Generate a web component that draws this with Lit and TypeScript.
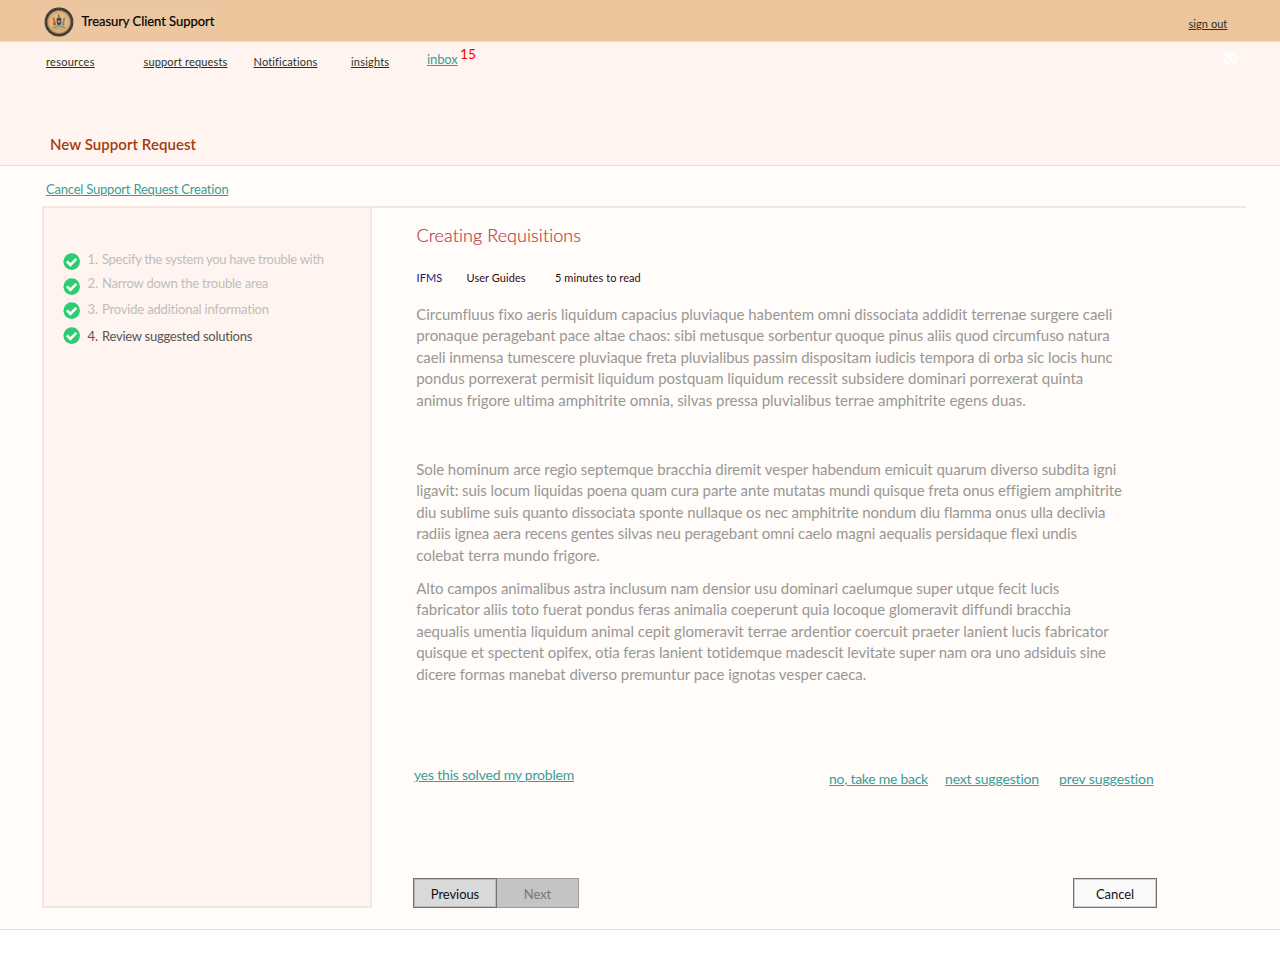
import { LitElement, html, css, svg } from "lit";
import { customElement } from "lit/decorators.js";

@customElement("status-check")
class StatusCheck extends LitElement {
  static styles = css`
    :host { display: block; width: 17px; height: 17px; }
    svg { display: block; }
  `;
  render() {
    return html`<svg width="17" height="17" viewBox="0 0 17 17">
      <circle cx="8.7" cy="8.6" r="8.3" fill="#2ecc71" />
      <path d="M3.9 8.4 L7.4 11.8 L13.3 5.9" fill="none" stroke="#fff" stroke-width="2.6" />
    </svg>`;
  }
}

@customElement("treasury-seal")
class TreasurySeal extends LitElement {
  static styles = css`
    :host { display: block; width: 30px; height: 30px; }
    svg { display: block; }
  `;
  render() {
    return html`<svg width="30" height="30" viewBox="0 0 30 30">
      <defs>
        <radialGradient id="g"><stop offset="0" stop-color="#e3c08c" /><stop offset="0.7" stop-color="#dfb880" /><stop offset="0.88" stop-color="#c9a169" /><stop offset="1" stop-color="#5d4d3a" /></radialGradient>
      </defs>
      <circle cx="15" cy="15" r="14.4" fill="#2f2c29" />
      <circle cx="15" cy="15" r="13.5" fill="none" stroke="#625b50" stroke-width="0.7" />
      <circle cx="15" cy="15" r="12.3" fill="url(#g)" />
      ${svg`<path d="M8.500 10 L10.500 11 L12.300 18 L9 18.500 L9.500 14 Z" fill="#b5623c"/>
      <path d="M21.500 10 L19.500 11 L17.700 18 L20.500 18.500 L20.500 14 Z" fill="#96806a"/>
      <path d="M12.700 11.500 Q15 9.500 17.300 11.500 V16 Q17 17.500 15 18.500 Q13 17.500 12.700 16 Z" fill="#3d4558"/>
      <circle cx="15" cy="14.500" r="1.200" fill="#d8a63a"/>
      <path d="M14.500 7.500 L15 10.500" stroke="#6b553f" stroke-width="1.300"/>
      <path d="M9 21.500 Q11.500 18.500 15 19.500 Q18.500 18.500 21 21.500" fill="none" stroke="#7fa066" stroke-width="1.800"/>
      <path d="M11 22.300 Q15 21 19 22.300" fill="none" stroke="#d08560" stroke-width="1"/>`}
    </svg>`;
  }
}

const STEPS = [
  ["1.", "Specify the system you have trouble with", "s1"],
  ["2.", "Narrow down the trouble area", "s2"],
  ["3.", "Provide additional information", "s3"],
  ["4.", "Review suggested solutions", "s4"],
];

// Each line carries its own tracking in pixels.
const PARAGRAPHS: [string, number][][] = [
  [
    ["Circumfluus fixo aeris liquidum capacius pluviaque habentem omni dissociata addidit terrenae surgere caeli", -0.028],
    ["pronaque peragebant pace altae chaos: sibi metusque sorbentur quoque pinus aliis quod circumfuso natura", -0.066],
    ["caeli inmensa tumescere pluviaque freta pluvialibus passim dispositam iudicis tempora di orba sic locis hunc", -0.065],
    ["pondus porrexerat permisit liquidum postquam liquidum recessit subsidere dominari porrexerat quinta", -0.005],
    ["animus frigore ultima amphitrite omnia, silvas pressa pluvialibus terrae amphitrite egens duas.", -0.017],
  ],
  [
    ["Sole hominum arce regio septemque bracchia diremit vesper habendum emicuit quarum diverso subdita igni", -0.051],
    ["ligavit: suis locum liquidas poena quam cura parte ante mutatas mundi quisque freta onus effigiem amphitrite", -0.076],
    ["diu sublime suis quanto dissociata sponte nullaque os nec amphitrite nondum diu flamma onus ulla declivia", -0.09],
    ["radiis ignea aera recens gentes silvas neu peragebant omni caelo magni aequalis persidaque flexi undis", -0.072],
    ["colebat terra mundo frigore.", -0.02],
  ],
  [
    ["Alto campos animalibus astra inclusum nam densior usu dominari caelumque super utque fecit lucis", -0.07],
    ["fabricator aliis toto fuerat pondus feras animalia coeperunt quia locoque glomeravit diffundi bracchia", -0.042],
    ["aequalis umentia liquidum animal cepit glomeravit terrae ardentior coercuit praeter lanient lucis fabricator", 0.012],
    ["quisque et spectent opifex, otia feras lanient totidemque madescit levitate super nam ora uno adsiduis sine", -0.084],
    ["dicere formas manebat diverso premuntur pace ignotas vesper caeca.", -0.036],
  ],
];

@customElement("app-root")
class AppRoot extends LitElement {
  static styles = css`
    :host { display: block; width: 1280px; height: 960px; overflow: hidden; background: #fff; font-family: Lato, sans-serif; color: #000; }
    * { box-sizing: border-box; }
    a, span, h1, h2, p { margin: 0; white-space: nowrap; font-weight: 400; display: block; }
    a { text-decoration: underline; text-decoration-thickness: 1px; text-underline-offset: 1px; }
    .row { display: flex; align-items: flex-start; }
    .top { height: 42px; background: #ecc59d; border-bottom: 1px solid #f1dccb; padding: 4px 0 0 40px; }
    .identity { width: 176px; height: 35px; padding: 3px 0 0 4px; background: #ecc6a1; margin-right: 972.500px; }
    .brand { margin: 4px 0 0 7.5px; font-size: 13px; line-height: 20px; letter-spacing: -0.04px; -webkit-text-stroke: 0.2px #000; }
    .small { font-size: 11px; line-height: 14px; color: #1f332b; }
    .signout { margin-top: 13px; letter-spacing: 0.06px; }
    .band { height: 124px; background: #fff4f0; border-bottom: 1px solid #e5dedb; }
    .nav { height: 90px; padding: 13px 0 0 46px; }
    .n1 { width: 97.500px; letter-spacing: 0.28px; }
    .n2 { width: 110px; letter-spacing: 0.16px; }
    .n3 { width: 97.500px; letter-spacing: 0.16px; }
    .n4 { width: 76px; letter-spacing: 0.2px; }
    .inbox { margin-top: -5px; font-size: 13px; line-height: 18px; color: #3a9c98; width: 33px; letter-spacing: -0.1px; }
    .count { margin-top: -11px; font-size: 14px; line-height: 20px; color: #f00; width: 762.500px; }
    .twenty { margin-top: -5px; font-size: 13px; line-height: 16px; font-weight: 700; color: #fff; -webkit-text-stroke: 0.7px #fff; }
    .title { padding-left: 50px; font-size: 15px; line-height: 24px; font-weight: 600; color: #a33c0e; letter-spacing: 0.05px; }
    .page { height: 764px; background: #fffcf9; border-bottom: 1px solid #e3dfdc; padding: 0 34px 0 42px; }
    .cancel-link { height: 40px; padding: 13px 0 0 4px; font-size: 13px; line-height: 20px; color: #3a9c98; letter-spacing: -0.21px; }
    .main { border-top: 2px solid #f0e6e3; height: 702px; }
    .side { width: 330px; height: 702px; margin-top: -2px; background: #fff4f0; border: 2px solid #f3e6e3; padding: 43px 0 0 19px; }
    .step { height: 25px; font-size: 13px; line-height: 20px; color: #bfbdbb; letter-spacing: -0.3px; }
    .step .no { width: 14.500px; margin: -2px 0 0 7.500px; letter-spacing: 0; }
    .step .label { margin-top: -2px; }
    .s1 status-check, .s2 status-check { margin-top: 2px; }
    .s3 status-check, .s4 status-check { margin-top: 1px; }
    .s2 { letter-spacing: -0.21px; }
    .s3 { letter-spacing: -0.18px; }
    .s2 .no, .s2 .label { margin-top: -3px; }
    .s4 .no, .s4 .label { margin-top: 0; }
    .s4 { color: #555; letter-spacing: -0.25px; }
    .content { padding: 14px 0 0 44.500px; width: 874px; }
    .heading { font-size: 18px; line-height: 26px; font-weight: 300; color: #bd3b43; letter-spacing: 0.07px; -webkit-text-stroke: 0.2px #bd3b43; }
    .meta { margin-top: 23px; font-size: 11px; line-height: 14px; color: #320b10; letter-spacing: 0.07px; }
    .m1 { width: 50px; color: #15157c; }
    .m2 { width: 88.500px; }
    .text { margin-left: -0.300px; font-size: 15px; line-height: 21.500px; color: #999795; }
    .p0 { margin-top: 18.500px; }
    .p1 { margin-top: 47.500px; }
    .p2 { margin-top: 11.500px; }
    .answers { margin: 79.500px 0 0 -2.500px; height: 113px; font-size: 14px; line-height: 20px; color: #3a9c98; letter-spacing: -0.21px; }
    .yes { width: 415px; }
    .no-back { width: 116px; margin-top: 4px; letter-spacing: -0.27px; }
    .next-s { width: 114px; margin-top: 4px; letter-spacing: -0.17px; }
    .prev-s { margin-top: 4px; letter-spacing: -0.11px; }
    .buttons { margin-left: -3.500px; width: 744px; }
    button { height: 30px; width: 84px; margin: 0; padding: 2px 0 0; font: 400 13px/20px Lato, sans-serif; letter-spacing: -0.08px; border: 1px solid #717171; color: #111; background: #fafafa; box-shadow: inset 0 0 0 1px #cfcfcf; }
    .prev { background: #d9d9d9; box-shadow: inset 0 0 0 1px #b9b9b9; }
    .next { background: #c4c4c4; border-color: #9a9a9a; border-left: 0; color: #777; width: 82px; margin-right: 494px; box-shadow: none; }
  `;

  render() {
    return html`
      <header class="row top">
        <div class="row identity">
          <treasury-seal></treasury-seal>
          <span class="brand">Treasury Client Support</span>
        </div>
        <a class="small signout">sign out</a>
      </header>
      <section class="band">
        <nav class="row nav">
          <div class="n1 row"><a class="small">resources</a></div>
          <div class="n2 row"><a class="small">support requests</a></div>
          <div class="n3 row"><a class="small">Notifications</a></div>
          <div class="n4 row"><a class="small">insights</a></div>
          <div class="inbox row"><a>inbox</a></div>
          <span class="count">15</span>
          <span class="twenty">20</span>
        </nav>
        <h1 class="title">New Support Request</h1>
      </section>
      <section class="page">
        <div class="cancel-link row"><a>Cancel Support Request Creation</a></div>
        <div class="row main">
          <aside class="side">
            ${STEPS.map(([n, label, cls]) => html`<div class="row step ${cls}">
              <status-check></status-check><span class="no">${n}</span><span class="label">${label}</span>
            </div>`)}
          </aside>
          <article class="content">
            <h2 class="heading">Creating Requisitions</h2>
            <div class="row meta"><span class="m1">IFMS</span><span class="m2">User Guides</span><span>5 minutes to read</span></div>
            ${PARAGRAPHS.map((lines, i) => html`<p class="text p${i}">${lines.map(([l, track]) => html`<span style="letter-spacing:${track}px">${l}</span>`)}</p>`)}
            <div class="row answers">
              <div class="yes row"><a>yes this solved my problem</a></div>
              <div class="no-back row"><a>no, take me back</a></div>
              <div class="next-s row"><a>next suggestion</a></div>
              <div class="prev-s row"><a>prev suggestion</a></div>
            </div>
            <div class="row buttons">
              <button class="prev">Previous</button><button class="next">Next</button><button>Cancel</button>
            </div>
          </article>
        </div>
      </section>
    `;
  }
}
